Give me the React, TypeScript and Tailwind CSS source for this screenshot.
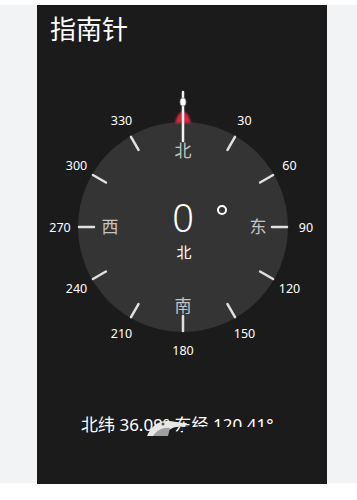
import React from "react";

const CX = 146;
const CY = 182;

function pt(angle: number, r: number) {
  const a = (angle * Math.PI) / 180;
  return { x: CX + r * Math.sin(a), y: CY - r * Math.cos(a) };
}

const degs = [30, 60, 90, 120, 150, 180, 210, 240, 270, 300, 330];

export default function App() {
  return (
    <div className="w-[357px] h-[500px] bg-white pt-[5px] font-['Noto_Sans','Noto_Sans_CJK_SC',sans-serif]">
      <div className="h-[478px] bg-[#f2f3f5] pl-[37px]">
        <div className="relative w-[290px] h-[479px] bg-[#1b1b1b] flex flex-col">
          <div className="pl-[13px] pt-[10px] text-[26px] leading-[26px] text-white font-['Noto_Sans_CJK_SC',sans-serif]">
            指南针
          </div>
          <svg width="290" height="330" className="mt-[4px]" viewBox="0 0 290 330">
            <circle cx={CX} cy={CY} r={105} fill="#343434" />
            {degs.map((d) => {
              const a = pt(d, 89);
              const b = pt(d, 104);
              return (
                <line
                  key={"t" + d}
                  x1={a.x}
                  y1={a.y}
                  x2={b.x}
                  y2={b.y}
                  stroke="#e0e0e0"
                  strokeWidth={2.5}
                  strokeLinecap="round"
                />
              );
            })}
            {degs.map((d) => {
              const p = pt(d, 123);
              return (
                <text
                  key={"n" + d}
                  x={p.x}
                  y={p.y + 4.5}
                  textAnchor="middle"
                  fontSize={12.5}
                  fill="#ffffff"
                >
                  {d}
                </text>
              );
            })}
            {[
              { a: 0, t: "北", r: 76 },
              { a: 90, t: "东", r: 75 },
              { a: 180, t: "南", r: 79 },
              { a: 270, t: "西", r: 73 },
            ].map((o) => {
              const p = pt(o.a, o.r);
              return (
                <text
                  key={o.t}
                  x={p.x}
                  y={p.y + 6}
                  textAnchor="middle"
                  fontSize={17}
                  fill="#c4c4c4"
                  className="font-['Noto_Sans_CJK_SC',sans-serif]"
                >
                  {o.t}
                </text>
              );
            })}
            <text
              x={CX}
              y={CY + 5}
              textAnchor="middle"
              fontSize={38}
              fontWeight={300}
              fill="#ffffff"
            >
              0
            </text>
            <circle cx={CX + 39} cy={CY - 17} r={4} fill="none" stroke="#ffffff" strokeWidth={2} />
            <text
              x={CX + 1}
              y={CY + 31}
              textAnchor="middle"
              fontSize={15}
              fill="#ffffff"
              className="font-['Noto_Sans_CJK_SC',sans-serif]"
            >
              北
            </text>
            <defs>
              <filter id="glow" x="-50%" y="-50%" width="200%" height="200%">
                <feGaussianBlur stdDeviation="1" />
              </filter>
            </defs>
            <path
              d={`M ${CX - 8} ${CY - 104} Q ${CX - 5} ${CY - 115} ${CX} ${CY - 116} Q ${CX + 5} ${CY - 115} ${CX + 8} ${CY - 104} Z`}
              fill="#d9283c"
              filter="url(#glow)"
            />
            <line
              x1={CX}
              y1={CY - 135}
              x2={CX}
              y2={CY - 86}
              stroke="#f2f2f2"
              strokeWidth={2.5}
              strokeLinecap="round"
            />
            <ellipse cx={CX} cy={CY - 125} rx={3} ry={4} fill="#ffffff" stroke="#9a9a9a" strokeWidth={0.8} />
          </svg>
          <div className="relative mt-[40px] pl-[44px] text-[17px] leading-[20px] text-white whitespace-nowrap font-['Noto_Sans','Noto_Sans_CJK_SC',sans-serif]">
            北纬 36.09° 东经 120.41°
            <div className="absolute left-[146px] top-[12px] w-[110px] h-[14px] bg-[#1b1b1b]" />
            <svg
              className="absolute left-[110px] top-[3px]"
              width="40"
              height="18"
              viewBox="0 0 40 18"
            >
              <path d="M0 18 C4 8 12 2 22 3 C30 4 35 5 40 5 L38 9 C30 8 26 9 22 12 L20 18 Z" fill="#e8e8e8" />
              <path d="M6 18 C10 12 16 9 23 10 L21 18 Z" fill="#a0a0a0" />
              <circle cx="16" cy="6" r="1.5" fill="#555" />
            </svg>
          </div>
        </div>
      </div>
    </div>
  );
}
